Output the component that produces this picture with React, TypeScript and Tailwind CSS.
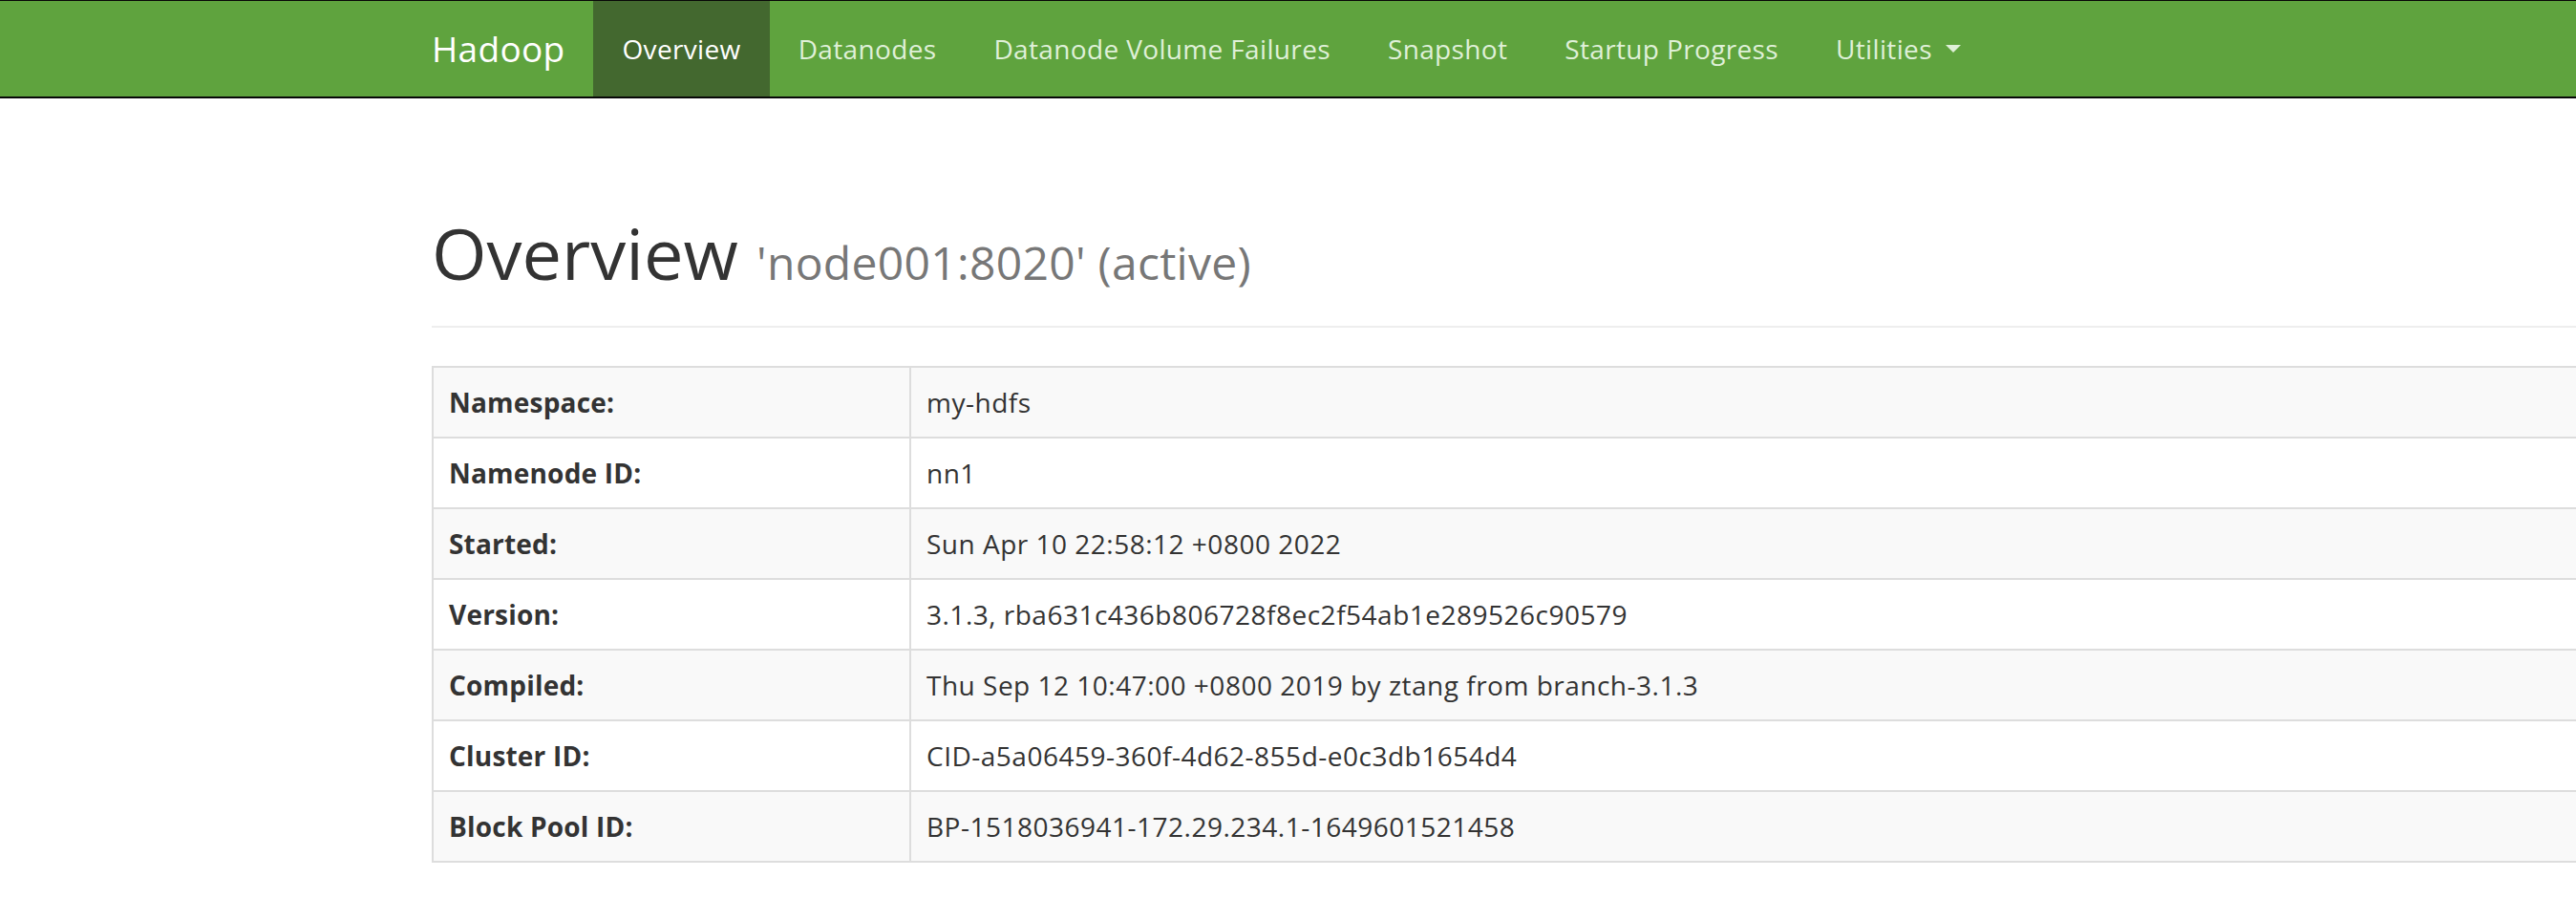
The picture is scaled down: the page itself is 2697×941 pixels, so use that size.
import React from "react";

const navItems = [
  { label: "Overview", active: true },
  { label: "Datanodes" },
  { label: "Datanode Volume Failures" },
  { label: "Snapshot" },
  { label: "Startup Progress" },
  { label: "Utilities", dropdown: true },
];

const rows: [string, string][] = [
  ["Namespace:", "my-hdfs"],
  ["Namenode ID:", "nn1"],
  ["Started:", "Sun Apr 10 22:58:12 +0800 2022"],
  ["Version:", "3.1.3, rba631c436b806728f8ec2f54ab1e289526c90579"],
  ["Compiled:", "Thu Sep 12 10:47:00 +0800 2019 by ztang from branch-3.1.3"],
  ["Cluster ID:", "CID-a5a06459-360f-4d62-855d-e0c3db1654d4"],
  ["Block Pool ID:", "BP-1518036941-172.29.234.1-1649601521458"],
];

const App: React.FC = () => {
  return (
    <div className="w-full min-h-screen overflow-hidden bg-white font-['Open_Sans',sans-serif] text-[#333]">
      <nav className="w-full bg-[#5fa33e] border-t border-b-2 border-[#080808]">
        <div className="ml-[422px] w-[2340px] px-[30px] flex">
          <a className="-ml-[30px] px-[30px] py-[30px] text-[37px] leading-[40px] tracking-[0.3px] text-white">Hadoop</a>
          <ul className="flex">
            {navItems.map((item) => (
              <li key={item.label}>
                <a
                  className={
                    item.active
                      ? "flex items-center px-[30px] py-[30px] text-[28px] leading-[40px] tracking-[0.35px] text-white bg-[#43682f]"
                      : "flex items-center px-[30px] py-[30px] text-[28px] leading-[40px] tracking-[0.35px] text-[#dff0d8]"
                  }
                >
                  {item.label}
                  {item.dropdown && (
                    <span className="ml-[14px] inline-block w-0 h-0 border-l-[8px] border-r-[8px] border-t-[8px] border-l-transparent border-r-transparent border-t-[#dff0d8]" />
                  )}
                </a>
              </li>
            ))}
          </ul>
        </div>
      </nav>

      <div className="ml-[422px] w-[2340px] px-[30px]">
        <div className="mt-[122px] mb-[40px] pb-[26px] border-b-2 border-[#eee]">
          <h1 className="text-[74px] leading-[80px] font-normal text-[#333]">
            Overview{" "}
            <small className="text-[48px] tracking-[0.3px] text-[#777]">'node001:8020' (active)</small>
          </h1>
        </div>

        <table className="w-full border-2 border-[#ddd] text-[28px] leading-[40px]">
          <tbody>
            {rows.map(([k, v], i) => (
              <tr key={k} className={i % 2 === 0 ? "bg-[#f9f9f9]" : "bg-white"}>
                <th className="w-[500px] border-2 border-[#ddd] p-[16px] text-left font-bold tracking-[0.2px]">{k}</th>
                <td className="border-2 border-[#ddd] p-[16px] tracking-[0.5px]">{v}</td>
              </tr>
            ))}
          </tbody>
        </table>
      </div>
    </div>
  );
};

export default App;
